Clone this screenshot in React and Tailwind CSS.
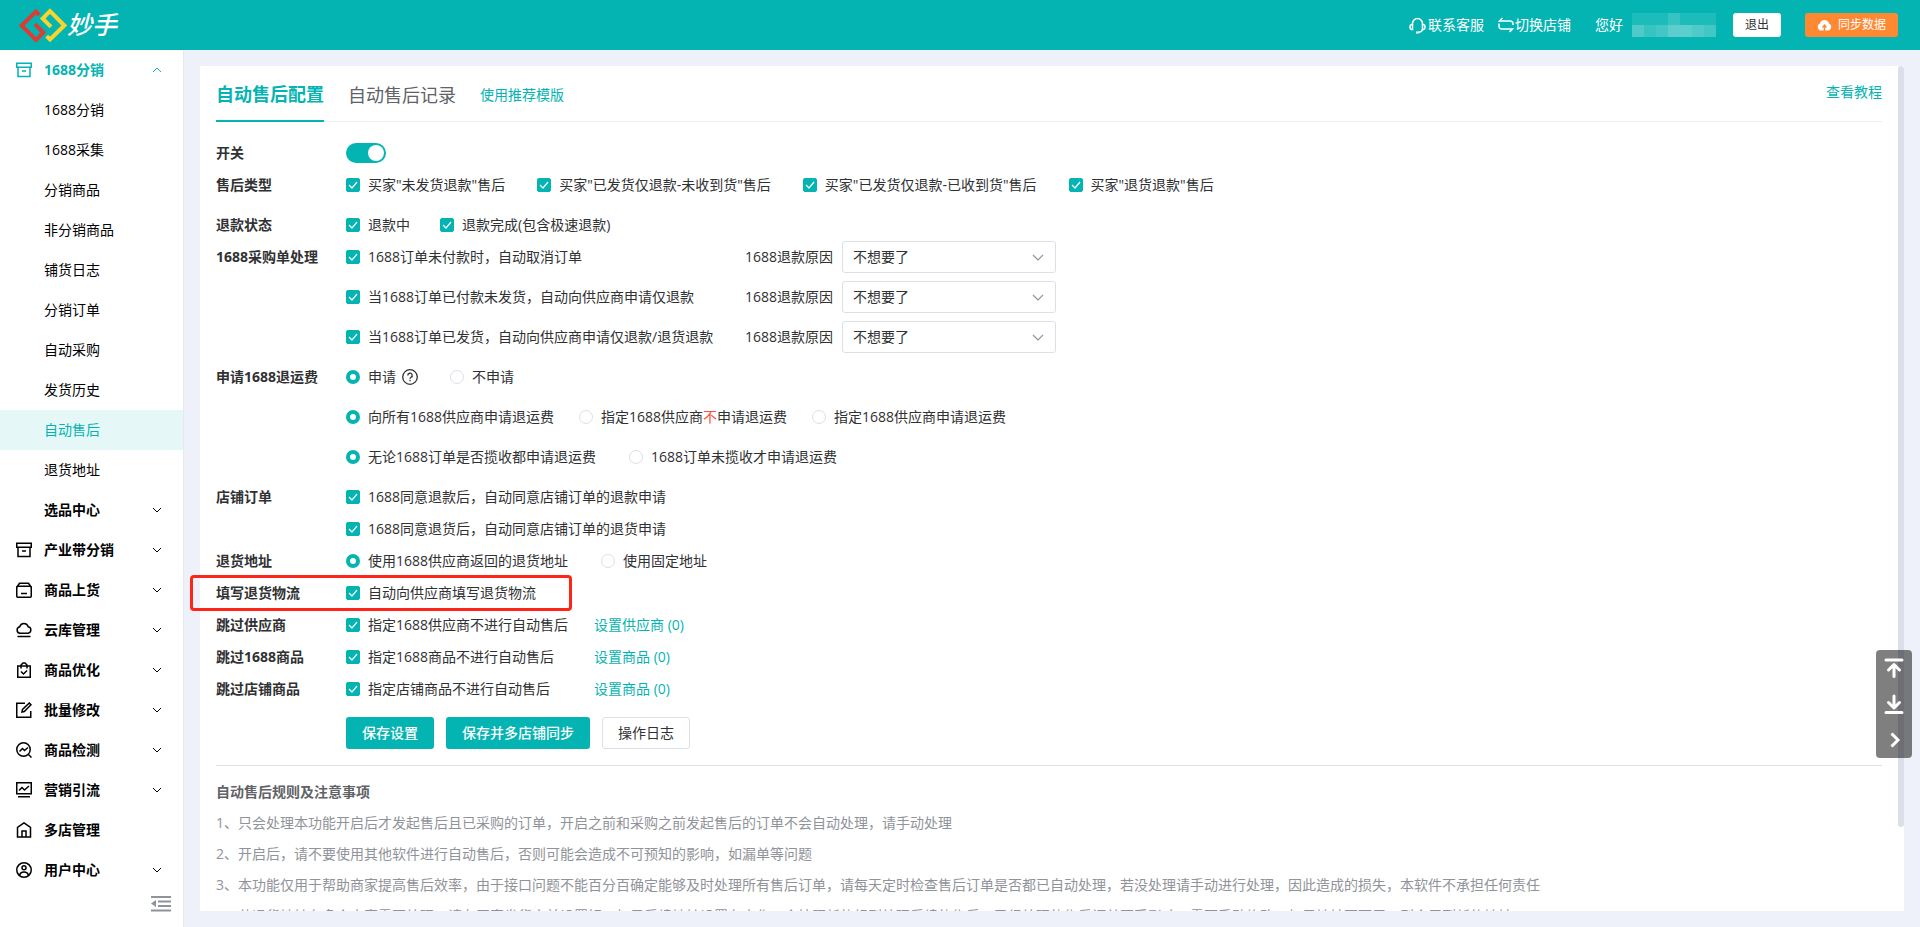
import React from 'react';

const archiveIcon = <>
    <rect x="0.75" y="1.25" width="14.5" height="4" />
    <path d="M2 5.25v9.25h12V5.25M6 9h4" />
  </>;

const menuGroups = [{
  name: '1688分销',
  icon: archiveIcon,
  open: true,
  children: ['1688分销', '1688采集', '分销商品', '非分销商品', '铺货日志', '分销订单', '自动采购', '发货历史', '自动售后', '退货地址']
}, {
  name: '选品中心',
  arrow: true
}, {
  name: '产业带分销',
  icon: archiveIcon,
  arrow: true
}, {
  name: '商品上货',
  arrow: true,
  icon: <>
      <rect x="0.75" y="4.25" width="14.5" height="11" rx="1" />
      <path d="M1 5 3.5 1.25h9L15 5M5 11.5h6" />
    </>
}, {
  name: '云库管理',
  arrow: true,
  icon: <path d="M4 11.25a3.3 3.3 0 0 1-.3-6.5 4.4 4.4 0 0 1 8.5 0 3.3 3.3 0 0 1-.2 6.5zM1.5 14.5h13" />
}, {
  name: '商品优化',
  arrow: true,
  icon: <>
      <rect x="1.75" y="4" width="12.5" height="11.25" />
      <path d="M5 6.5V3l2-2h2l2 2v3.500M5 9.500l2.500 2.500L11 8.500" />
    </>
}, {
  name: '批量修改',
  arrow: true,
  icon: <path d="M9 1.250H.75v14h14V9M6 10l.5-2.500 6.800-6.500 1.700 1.700-6.700 6.800z" />
}, {
  name: '商品检测',
  arrow: true,
  icon: <>
      <circle cx="7.500" cy="7.500" r="6.750" />
      <path d="m12.500 12.500 3 3M3.500 9.500 6.500 6.500l2 2L12 5.500" />
    </>
}, {
  name: '营销引流',
  arrow: true,
  icon: <>
      <rect x="0.75" y="0.75" width="14.5" height="11" />
      <path d="M3 8.500l3-3 2.500 2.500L13 4M2 14.750h12" />
    </>
}, {
  name: '多店管理',
  icon: <>
      <path d="M1.500 15V5.500L8 .9l6.500 4.600V15z" />
      <path d="M6 15V9h4v6" />
    </>
}, {
  name: '用户中心',
  arrow: true,
  icon: <>
      <circle cx="8" cy="8" r="7.250" />
      <circle cx="8" cy="5.750" r="2" />
      <path d="M3.500 13.500c.5-2.500 2-3.500 4.500-3.500s4 1 4.500 3.500" />
    </>
}];

const purchaseRules = ['1688订单未付款时，自动取消订单', '当1688订单已付款未发货，自动向供应商申请仅退款', '当1688订单已发货，自动向供应商申请仅退款/退货退款'];

const notes = ['1、只会处理本功能开启后才发起售后且已采购的订单，开启之前和采购之前发起售后的订单不会自动处理，请手动处理', '2、开启后，请不要使用其他软件进行自动售后，否则可能会造成不可预知的影响，如漏单等问题', '3、本功能仅用于帮助商家提高售后效率，由于接口问题不能百分百确定能够及时处理所有售后订单，请每天定时检查售后订单是否都已自动处理，若没处理请手动进行处理，因此造成的损失，本软件不承担任何责任', '4、若退货地址有多个商家需要处理，请在买家发货之前设置好，如果后续地址设置有变化，会按照新的规则处理后续的售后，已经处理的售后订单不受影响，需要手动修改，如果地址不可用，则会用到新的地址'];

// opacity of the tiles that hide the account name
const maskTiles = ['bg-white/10', 'bg-white/10', 'bg-white/10', 'bg-white/20', 'bg-white/10', 'bg-white/10', 'bg-white/10', 'bg-white/30', 'bg-white/20', 'bg-white/25', 'bg-white/35', 'bg-white/35', 'bg-white/30', 'bg-white/25'];

function Chevron({
  up,
  className
}) {
  return <svg className={className} width="10" height="6" viewBox="0 0 10 6" fill="none" stroke="currentColor">
      <path d={up ? 'M1 5l4-4 4 4' : 'M1 1l4 4 4-4'} />
    </svg>;
}

function Check({
  children
}) {
  return <label className="flex items-center gap-2 whitespace-nowrap">
      <span className="grid">
        <input type="checkbox" defaultChecked className="peer [grid-area:1/1] size-[14px] appearance-none rounded-xs border border-[#dcdfe6] checked:border-[#04b4b3] checked:bg-[#04b4b3]" />
        <svg className="pointer-events-none invisible [grid-area:1/1] peer-checked:visible" width="14" height="14" viewBox="0 0 14 14" fill="none" stroke="#fff" strokeWidth="1.2">
          <path d="M3 7l3 3 5-6" />
        </svg>
      </span>
      <span>{children}</span>
    </label>;
}

function Radio({
  name,
  checked,
  children
}) {
  return <label className="flex items-center gap-2 whitespace-nowrap">
      <input type="radio" name={name} defaultChecked={checked} className="size-[14px] appearance-none rounded-full border border-[#dcdfe6] bg-white checked:border-4 checked:border-[#04b4b3]" />
      <span>{children}</span>
    </label>;
}

function Row({
  label,
  className = '',
  children
}) {
  return <div className={`flex items-start ${className}`}>
      <div className="w-[130px] shrink-0 font-bold leading-8">{label}</div>
      <div className="min-w-0">{children}</div>
    </div>;
}

function Line({
  className = '',
  children
}) {
  return <div className={`flex h-8 items-center ${className}`}>{children}</div>;
}

function Header() {
  return <header className="flex h-[50px] shrink-0 items-center bg-[#04b4b3] pl-[19px] pr-[22px] text-sm text-white">
      <svg width="48" height="35" viewBox="0 0 144 104" fill="none" strokeWidth="12">
        <path d="M61 20 51 10 8 52l43 43 22-22-25-25" stroke="#dc3c32" />
        <path d="M83 84l10 10 43-42L93 9 71 31l25 25" stroke="#f8d42c" />
      </svg>
      <span className="text-[25px] font-medium italic">妙手</span>
      <div className="ml-auto flex items-center">
        <a href="#service" className="flex items-center gap-[2px]">
          <svg width="17" height="17" viewBox="0 0 17 17" fill="none" stroke="currentColor" strokeWidth="1.5">
            <path d="M3.500 8V6.500a5 5 0 0 1 10 0V8M13.500 12c0 2-2 3.200-4 3.200" />
            <path d="M3.500 7.500v5h-1a2 2 0 0 1-1.500-2v-1a2 2 0 0 1 1.500-2zM13.500 7.500v5h1a2 2 0 0 0 1.500-2v-1a2 2 0 0 0-1.500-2z" />
            <path d="M7 15.500h3" strokeWidth="2" />
          </svg>
          联系客服
        </a>
        <a href="#shops" className="ml-[14px] flex items-center gap-px">
          <svg width="16" height="16" viewBox="0 0 16 16" fill="none" stroke="currentColor" strokeWidth="1.5">
            <path d="M4.500 1 1.500 4H12a3 3 0 0 1 3 3v1M1 6.500V9a3 3 0 0 0 3 3h10.500l-3 3" />
          </svg>
          切换店铺
        </a>
        <span className="ml-6">您好</span>
        <div className="ml-[9px] grid grid-cols-7" aria-hidden="true">
          {maskTiles.map((tile, i) => <span key={i} className={`h-3 w-3 ${tile}`}></span>)}
        </div>
        <button className="ml-[17px] h-6 w-12 rounded-[3px] bg-white text-xs text-[#303133]">退出</button>
        <button className="ml-6 flex h-6 items-center gap-[6px] rounded-[3px] bg-[#ff8833] px-3 text-xs">
          <svg width="15" height="12" viewBox="0 0 15 12" fill="currentColor">
            <path fillRule="evenodd" d="M4 11.500A3.600 3.600 0 0 1 2.900 4.600a4.700 4.700 0 0 1 9.100 0 3.600 3.600 0 0 1-1 6.900H8.300V8.500h2L7.500 5 4.700 8.500h2v3z" />
          </svg>
          同步数据
        </button>
      </div>
    </header>;
}

function Sidebar() {
  return <nav className="flex w-[184px] shrink-0 flex-col border-r border-[#e6e9f0] bg-white text-sm text-black">
      {menuGroups.map(group => <div key={group.name}>
          <a href="#menu" className={`flex h-10 items-center pl-4 pr-[21px] font-bold ${group.open ? 'text-[#04b4b3]' : ''}`}>
            <svg className="mr-3" width="16" height="16" viewBox="0 0 16 16" fill="none" stroke="currentColor" strokeWidth="1.5">
              {group.icon}
            </svg>
            {group.name}
            {(group.open || group.arrow) && <Chevron up={group.open} className="ml-auto" />}
          </a>
          {group.children && group.children.map(item => <a key={item} href="#item" className={`flex h-10 items-center pl-11 ${item === '自动售后' ? 'bg-[#e5f7f7] text-[#04b4b3]' : ''}`}>{item}</a>)}
        </div>)}
      <button className="mr-3 mt-[6px] self-end text-[#909399]" aria-label="收起菜单">
        <svg width="20" height="16" viewBox="0 0 20 16" fill="currentColor">
          <path d="M0 0h20v2H0zM7 4.500h13v2H7zM7 9h13v2H7zM0 13.500h20v2H0zM5 4v7L0 7.500z" />
        </svg>
      </button>
    </nav>;
}

export default function App() {
  return <div className="flex h-screen flex-col overflow-hidden bg-[#eef1f9] font-['Open_Sans','Noto_Sans_CJK_SC',sans-serif]">
      <Header />
      <div className="flex min-h-0 flex-1">
        <Sidebar />
        <main className="relative m-4 min-w-0 flex-1 overflow-y-clip bg-white pl-4 pr-[22px] text-sm text-[#303133]">
          <div className="flex h-[56px] items-stretch gap-6 border-b border-[#ebeef5]">
            <button className="-mb-px border-b-2 border-[#04b4b3] pt-[2px] text-lg font-bold text-[#04b4b3]">自动售后配置</button>
            <button className="pt-[2px] text-lg text-[#606266]">自动售后记录</button>
            <button className="pt-[2px] text-[#04b4b3]">使用推荐模版</button>
            <a href="#help" className="mb-1 ml-auto self-center text-[#04b4b3]">查看教程</a>
          </div>

          <div className="pt-[15px]">
            <Row label={<label htmlFor="enabled">开关</label>}>
              <Line>
                <input id="enabled" type="checkbox" role="switch" defaultChecked className="flex h-5 w-10 appearance-none items-center rounded-full bg-[#dcdfe6] px-[2px] before:size-4 before:rounded-full before:bg-white checked:justify-end checked:bg-[#04b4b3]" />
              </Line>
            </Row>
            <Row label="售后类型">
              <Line className="gap-8">
                <Check>买家"未发货退款"售后</Check>
                <Check>买家"已发货仅退款-未收到货"售后</Check>
                <Check>买家"已发货仅退款-已收到货"售后</Check>
                <Check>买家"退货退款"售后</Check>
              </Line>
            </Row>
            <Row label="退款状态" className="mt-2">
              <Line className="gap-[30px]">
                <Check>退款中</Check>
                <Check>退款完成(包含极速退款)</Check>
              </Line>
            </Row>
            <Row label="1688采购单处理">
              <div className="flex flex-col gap-2">
                {purchaseRules.map((rule, i) => <Line key={rule}>
                    <div className="w-[399px]"><Check>{rule}</Check></div>
                    <label htmlFor={`reason-${i}`} className="w-[97px]">1688退款原因</label>
                    <div className="relative">
                      <select id={`reason-${i}`} className="h-8 w-[214px] appearance-none rounded-[3px] border border-[#dcdfe6] bg-white px-[10px]">
                        <option>不想要了</option>
                      </select>
                      <svg className="pointer-events-none absolute right-3 top-[13px] text-[#909399]" width="12" height="7" viewBox="0 0 12 7" fill="none" stroke="currentColor" strokeWidth="1.2">
                        <path d="M1 1l5 5 5-5" />
                      </svg>
                    </div>
                  </Line>)}
              </div>
            </Row>
            <Row label="申请1688退运费" className="mt-2">
              <div className="flex flex-col gap-2">
                <Line>
                  <Radio name="freight" checked>申请</Radio>
                  <svg className="ml-[6px] mr-8" width="16" height="16" viewBox="0 0 16 16" fill="none" stroke="currentColor" strokeWidth="1.3">
                    <circle cx="8" cy="8" r="7.300" />
                    <path d="M5.800 6.500a2.200 2.200 0 1 1 3.300 1.800c-.8.5-1.100.8-1.100 1.500M8 10.800v1.400" />
                  </svg>
                  <Radio name="freight">不申请</Radio>
                </Line>
                <Line className="gap-[25px]">
                  <Radio name="supplier" checked>向所有1688供应商申请退运费</Radio>
                  <Radio name="supplier">指定1688供应商<span className="text-[#ff4d3c]">不</span>申请退运费</Radio>
                  <Radio name="supplier">指定1688供应商申请退运费</Radio>
                </Line>
                <Line className="gap-[33px]">
                  <Radio name="pickup" checked>无论1688订单是否揽收都申请退运费</Radio>
                  <Radio name="pickup">1688订单未揽收才申请退运费</Radio>
                </Line>
              </div>
            </Row>
            <Row label="店铺订单" className="mt-2">
              <Line><Check>1688同意退款后，自动同意店铺订单的退款申请</Check></Line>
              <Line><Check>1688同意退货后，自动同意店铺订单的退货申请</Check></Line>
            </Row>
            <Row label="退货地址">
              <Line className="gap-[33px]">
                <Radio name="address" checked>使用1688供应商返回的退货地址</Radio>
                <Radio name="address">使用固定地址</Radio>
              </Line>
            </Row>
            <Row label="填写退货物流" className="relative">
              <Line><Check>自动向供应商填写退货物流</Check></Line>
              <div className="pointer-events-none absolute -left-[26px] -top-[2px] h-9 w-[382px] rounded-[4px] border-[3px] border-[#ff2418]"></div>
            </Row>
            <Row label="跳过供应商">
              <Line>
                <div className="w-[248px]"><Check>指定1688供应商不进行自动售后</Check></div>
                <button className="text-[#04b4b3]">设置供应商 (0)</button>
              </Line>
            </Row>
            <Row label="跳过1688商品">
              <Line>
                <div className="w-[248px]"><Check>指定1688商品不进行自动售后</Check></div>
                <button className="text-[#04b4b3]">设置商品 (0)</button>
              </Line>
            </Row>
            <Row label="跳过店铺商品">
              <Line>
                <div className="w-[248px]"><Check>指定店铺商品不进行自动售后</Check></div>
                <button className="text-[#04b4b3]">设置商品 (0)</button>
              </Line>
            </Row>
            <div className="ml-[130px] mt-3 flex gap-3">
              <button className="h-8 rounded-[3px] bg-[#04b4b3] px-4 font-medium text-white">保存设置</button>
              <button className="h-8 rounded-[3px] bg-[#04b4b3] px-4 font-medium text-white">保存并多店铺同步</button>
              <button className="h-8 rounded-[3px] border border-[#dcdfe6] bg-white px-[15px]">操作日志</button>
            </div>
          </div>

          <section className="mt-4 border-t border-[#dcdfe6] pt-[10px] leading-[31px] text-[#909399]">
            <h2 className="font-bold text-[#606266]">自动售后规则及注意事项</h2>
            {notes.map(note => <p key={note} className="whitespace-nowrap">{note}</p>)}
          </section>

          <div className="absolute right-0 top-0 h-[90%] w-[6px] rounded-full bg-[#dddfe8]"></div>
        </main>
      </div>

      <div className="fixed bottom-[169px] right-2 flex h-[108px] w-9 flex-col rounded-[4px] bg-black/50 text-white">
        <button className="flex flex-1 items-center justify-center" aria-label="回到顶部">
          <svg width="20" height="20" viewBox="0 0 20 20" fill="none" stroke="currentColor" strokeWidth="3" strokeLinecap="round" strokeLinejoin="round">
            <path d="M2 2h16M10 18.500V7M4.500 12 10 6.500l5.500 5.500" />
          </svg>
        </button>
        <button className="flex flex-1 items-center justify-center" aria-label="回到底部">
          <svg width="20" height="20" viewBox="0 0 20 20" fill="none" stroke="currentColor" strokeWidth="3" strokeLinecap="round" strokeLinejoin="round">
            <path d="M2 18.500h16M10 2v11.500M4.500 8.500 10 14l5.500-5.500" />
          </svg>
        </button>
        <button className="flex flex-1 items-center justify-center" aria-label="收起">
          <svg width="20" height="20" viewBox="0 0 20 20" fill="none" stroke="currentColor" strokeWidth="3">
            <path d="M7.500 3.500 14 10l-6.500 6.500" />
          </svg>
        </button>
      </div>
    </div>;
}
